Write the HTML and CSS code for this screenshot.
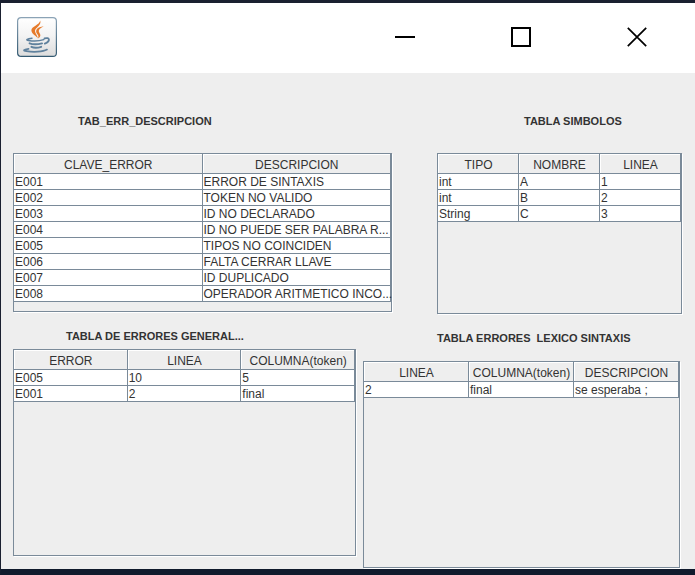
FILE: index.html
```html
<!DOCTYPE html>
<html lang="es">
<head>
<meta charset="utf-8">
<title>Tablas</title>
<link rel="stylesheet" href="styles.css">
</head>
<body>
<div class="window">
  <header class="titlebar">
    <svg class="app-icon" viewBox="0 0 40 40" aria-hidden="true">
      <defs>
        <linearGradient id="tile" x1="0" y1="0" x2="0" y2="1">
          <stop offset="0" stop-color="#fff"/><stop offset=".45" stop-color="#f4f4f4"/><stop offset="1" stop-color="#dcdcdc"/>
        </linearGradient>
        <linearGradient id="edge" x1="0" y1="0" x2="0" y2="1">
          <stop offset="0" stop-color="#8ba3b6"/><stop offset="1" stop-color="#345a72"/>
        </linearGradient>
      </defs>
      <rect x=".6" y=".6" width="38.8" height="38.8" rx="3.5" fill="url(#tile)" stroke="url(#edge)" stroke-width="1.2"/>
      <g fill="#e67a2a">
        <path d="M23.2 3.6C25 8.6 17.6 11 18 14.2C18.3 16.8 20.8 18.5 20.8 21.4C19.6 18.8 14.6 17.2 14.4 13.4C14.2 9.6 22.6 8.2 23.2 3.6Z"/>
        <path d="M26.8 9.2C23.6 11 21.4 12.4 21.8 14.4C22.2 16 23.8 17 23.3 18.8C23 20.2 22 21 20.8 21.6C22 19.6 21.4 18.6 20.2 17C17.6 13.4 20 10 26.8 9.2Z"/>
      </g>
      <g fill="none" stroke="#5f819d" stroke-linecap="round">
        <path d="M15 21.2C10.5 21.8 8 22.8 11.5 23.4C16 24.2 23 23.8 26.8 22.6" stroke-width="1.5"/>
        <path d="M27.5 21.4C32.8 19.8 33.8 24.2 27.8 26.6" stroke-width="1.8"/>
        <path d="M12.6 26.3C15.5 27.5 21 27.4 25 26.4" stroke-width="2"/>
        <path d="M14.4 29.8C17 31 21 30.8 24.2 29.8" stroke-width="1.9"/>
        <path d="M11.5 31.8C6.5 32.4 5.6 33.6 9.5 34.2C16 35.2 26 35 30 32.6" stroke-width="1.8"/>
      </g>
    </svg>
    <div class="controls">
      <button type="button" aria-label="Minimizar"><svg viewBox="0 0 20 20"><path d="M0 10H20"/></svg></button>
      <button type="button" aria-label="Maximizar"><svg viewBox="0 0 20 20"><path d="M1 1H19V19H1Z"/></svg></button>
      <button type="button" aria-label="Cerrar"><svg viewBox="0 0 20 20"><path class="cross" d="M.8 .8L19.2 19.2M19.2 .8L.8 19.2"/></svg></button>
    </div>
  </header>
  <main>
    <div class="row row-top">
      <section class="errors">
        <h2 id="t1">TAB_ERR_DESCRIPCION</h2>
        <div class="pane">
          <table aria-labelledby="t1">
            <thead><tr><th>CLAVE_ERROR</th><th>DESCRIPCION</th></tr></thead>
            <tbody>
              <tr><td>E001</td><td>ERROR DE SINTAXIS</td></tr>
              <tr><td>E002</td><td>TOKEN NO VALIDO</td></tr>
              <tr><td>E003</td><td>ID NO DECLARADO</td></tr>
              <tr><td>E004</td><td>ID NO PUEDE SER PALABRA R...</td></tr>
              <tr><td>E005</td><td>TIPOS NO COINCIDEN</td></tr>
              <tr><td>E006</td><td>FALTA CERRAR LLAVE</td></tr>
              <tr><td>E007</td><td>ID DUPLICADO</td></tr>
              <tr><td>E008</td><td>OPERADOR ARITMETICO INCO...</td></tr>
            </tbody>
          </table>
        </div>
      </section>
      <section class="symbols">
        <h2 id="t2">TABLA SIMBOLOS</h2>
        <div class="pane">
          <table aria-labelledby="t2">
            <thead><tr><th>TIPO</th><th>NOMBRE</th><th>LINEA</th></tr></thead>
            <tbody>
              <tr><td>int</td><td>A</td><td>1</td></tr>
              <tr><td>int</td><td>B</td><td>2</td></tr>
              <tr><td>String</td><td>C</td><td>3</td></tr>
            </tbody>
          </table>
        </div>
      </section>
    </div>
    <div class="row row-bottom">
      <section class="general">
        <h2 id="t3">TABLA DE ERRORES GENERAL...</h2>
        <div class="pane">
          <table aria-labelledby="t3">
            <thead><tr><th>ERROR</th><th>LINEA</th><th>COLUMNA(token)</th></tr></thead>
            <tbody>
              <tr><td>E005</td><td>10</td><td>5</td></tr>
              <tr><td>E001</td><td>2</td><td>final</td></tr>
            </tbody>
          </table>
        </div>
      </section>
      <section class="syntax">
        <h2 id="t4">TABLA ERRORES&nbsp; LEXICO SINTAXIS</h2>
        <div class="pane">
          <table aria-labelledby="t4">
            <thead><tr><th>LINEA</th><th>COLUMNA(token)</th><th>DESCRIPCION</th></tr></thead>
            <tbody>
              <tr><td>2</td><td>final</td><td>se esperaba ;</td></tr>
            </tbody>
          </table>
        </div>
      </section>
    </div>
  </main>
</div>
</body>
</html>
```
FILE: styles.css
```css
* { box-sizing: border-box; }

body {
  margin: 0;
  background: #101a2c;
  color: #333;
  font: 12px/14px "Liberation Sans", Arial, sans-serif;
}

.window {
  display: flex;
  flex-direction: column;
  min-height: 100vh;
  border: solid #1a2030;
  border-width: 3px 0 6px 1px;
  border-bottom-color: #101a2c;
}

.titlebar {
  display: flex;
  align-items: stretch;
  justify-content: space-between;
  height: 70px;
  padding-left: 16px;
  background: #fff;
}

.app-icon {
  width: 40px;
  height: 40px;
  margin-top: 14px;
}

.controls { display: flex; }

.controls button {
  display: flex;
  align-items: center;
  justify-content: center;
  width: 116px;
  padding: 0 0 2px;
  border: 0;
  background: none;
}

.controls svg {
  width: 20px;
  height: 20px;
  fill: none;
  stroke: #000;
  stroke-width: 2;
}

.controls .cross { stroke-width: 1.7; }

main {
  flex: 1;
  background: #eee;
}

.row {
  display: grid;
  align-items: start;
}

.row-top {
  grid-template-columns: 379fr 245fr;
  gap: 45px;
  padding: 40px 13px 0 12px;
}

.row-bottom {
  grid-template-columns: 343fr 317fr;
  gap: 7px;
  padding: 14px 15px 0 12px;
}

h2 {
  margin: 0;
  font-size: 11px;
  line-height: 16px;
  white-space: nowrap;
}

.errors h2 { padding-left: 65px; margin-bottom: 24px; }
.symbols h2 { padding-left: 87px; margin-bottom: 24px; }
.general h2 { padding-left: 53px; margin-bottom: 5px; }
.syntax h2 { padding: 2px 0 0 74px; margin-bottom: 15px; }

.pane {
  border: 1px solid #7a8a99;
  box-shadow: 1px 1px 0 #fff;
}

.row-top .pane { min-height: 159px; }
.symbols .pane { min-height: 161px; }
.row-bottom .pane { min-height: 207px; }

table {
  width: 100%;
  table-layout: fixed;
  border-spacing: 0;
}

th, td {
  padding: 1px 0 0 1px;
  border: solid #7a8a99;
  border-width: 0 1px 1px 0;
  white-space: nowrap;
}

th {
  height: 20px;
  padding-top: 3px;
  font-weight: normal;
  box-shadow: inset 1px 1px 0 #fff;
}

td {
  height: 16px;
  background: #fff;
  text-align: left;
}
```
